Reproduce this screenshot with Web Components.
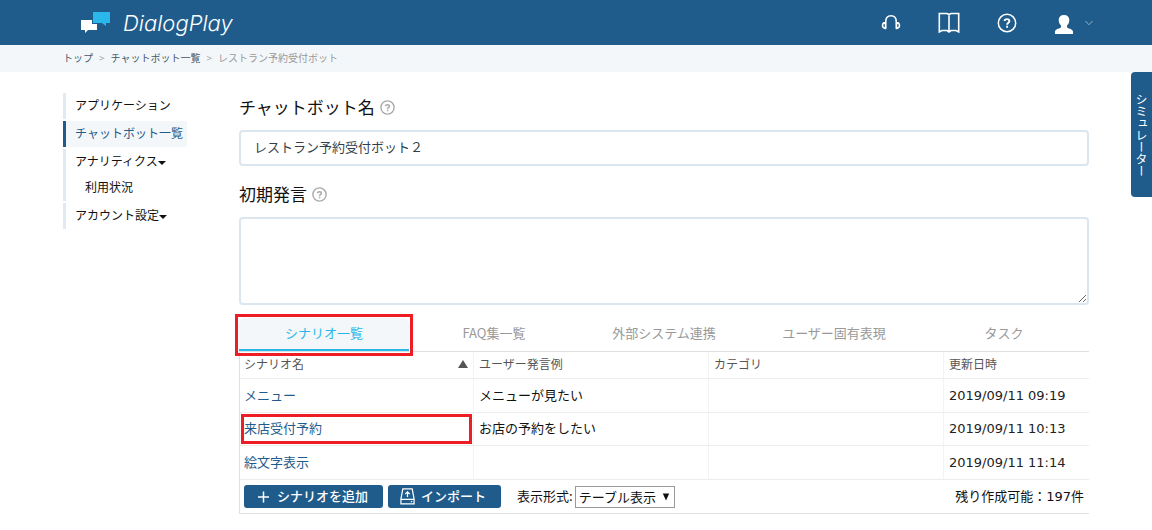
<!DOCTYPE html>
<html lang="ja">
<head>
<meta charset="utf-8">
<title>DialogPlay</title>
<style>
  body { margin: 0; background: #fff; color: #111; font: 13px/20px "Noto Sans CJK JP", "Noto Sans", sans-serif; }
</style>
</head>
<body>
<dp-app></dp-app>

<template id="t-header">
  <style>
    :host { display: flex; align-items: center; justify-content: space-between; height: 45px; padding: 0 59px 0 80px; background: #1f5c8b; color: #fff; }
    a { color: inherit; text-decoration: none; display: flex; align-items: center; }
    .brand { gap: 13px; font: italic 300 22px/28px Inter, sans-serif; }
    nav { display: flex; align-items: center; gap: 37px; }
    svg { display: block; }
    .user { gap: 11px; }
  </style>
  <a class="brand" href="#">
    <svg width="30" height="24" viewBox="0 0 30 24"><path fill="#2ab8ec" d="M13 1h17v11h-4v3l-4-3h-9z"/><path fill="#fff" d="M1 9h11v4h5v6H8l-3 3v-3H1z"/></svg>
    <span>DialogPlay</span>
  </a>
  <nav aria-label="ユーティリティ">
    <a href="#" aria-label="サポート"><svg width="20" height="20" viewBox="0 0 20 20" fill="none" stroke="#fff" stroke-width="1.500"><path d="M4.800 15.500V8.500C4.800 4.700 6.800 2.700 10 2.700s5.200 2 5.200 5.800V15.500M4.500 9.500C2.500 9.700 1.500 11 1.500 12.500s1 2.800 3 3zM15.500 9.500c2 .2 3 1.500 3 3s-1 2.800-3 3z"/></svg></a>
    <a href="#" aria-label="マニュアル"><svg width="22" height="22" viewBox="0 0 22 22" fill="none" stroke="#fff" stroke-width="1.600"><path d="M1.300 1.500H9l2 1 2-1h7.700V20l-2.700-1.500h-5L11 20l-2-1.500H4L1.300 20zM11 2.500V19"/></svg></a>
    <a href="#" aria-label="ヘルプ"><svg width="20" height="20" viewBox="0 0 20 20" fill="none" stroke="#fff"><circle cx="10" cy="10" r="8.700" stroke-width="1.500"/><path stroke-width="1.900" d="M7.600 8C7.600 5.500 12.400 5.500 12.400 8c0 1.700-2.300 1.600-2.300 3.700M10.100 12.700v2"/></svg></a>
    <a class="user" href="#" aria-label="アカウント">
      <svg width="20" height="22" viewBox="0 0 20 22" fill="#fff"><path d="M10 3c3.500 0 5.300 2 5.300 5 0 2.400-1 4.200-2.300 5.400v1.600c0 1.400 6 2 6 4.500V22H1v-2.500c0-2.500 6-3.100 6-4.500v-1.600C5.700 12.200 4.700 10.400 4.700 8c0-3 1.800-5 5.300-5z"/></svg>
      <svg width="8" height="6" viewBox="0 0 8 6" fill="none" stroke="#8fb0c9"><path d="M.5 1L4 4.800 7.500 1"/></svg>
    </a>
  </nav>
</template>

<template id="t-crumbs">
  <style>
    :host { display: block; height: 27px; padding: 0 63px; background: #f3f7fa; font-size: 10px; line-height: 26px; color: #999; }
    ol { display: flex; gap: 6px; margin: 0; padding: 0; list-style: none; }
    li + li::before { content: ">"; margin-right: 6px; color: #aaa; }
    a { color: #46586a; text-decoration: none; }
  </style>
  <ol><li><a href="#">トップ</a></li><li><a href="#">チャットボット一覧</a></li><li aria-current="page">レストラン予約受付ボット</li></ol>
</template>

<template id="t-nav-item">
  <style>
    :host { display: block; box-sizing: border-box; border-left: 3px solid #e1eaf2; padding-left: 9px; font-size: 12px; line-height: 26px; }
    :host([active]) { border-color: #1f5c8b; background: #f3f7fa; }
    a { display: flex; align-items: center; color: #111; text-decoration: none; height: 24px; padding-bottom: 2px; }
    :host([active]) a { color: #1f5c8b; }
    :host([menu]) a::after { content: ""; border: 4px solid transparent; border-top-color: #111; border-bottom: 0; margin-top: 4px; }
    ::slotted(*) { display: block; padding-left: 10px; height: 26px; }
  </style>
  <a href="#"></a><slot></slot>
</template>

<template id="t-sub-link">
  <style>
    a { color: #111; text-decoration: none; line-height: 24px; display: block; }
  </style>
  <a href="#"><slot></slot></a>
</template>

<template id="t-field">
  <style>
    :host { display: block; }
    .head { display: flex; align-items: center; gap: 5px; height: 27px; margin-bottom: 10px; }
    label { font-size: 17px; line-height: 27px; }
    svg { display: block; margin-top: 2px; }
    input, textarea { display: block; box-sizing: border-box; width: 100%; margin: 0; border: 2px solid #dce6ee; border-radius: 4px; padding: 0 13px 3px; background: #fff; color: #333f4a; font: inherit; outline: 0; }
    input { height: 36px; }
    textarea { height: 88px; resize: vertical; }
  </style>
  <div class="head">
    <label for="control"></label>
    <svg width="15" height="15" viewBox="0 0 15 15" fill="none" stroke="#aaa"><circle cx="7.500" cy="7.500" r="6.600" stroke-width="1.400"/><path stroke-width="1.500" d="M5.600 6.200c0-2 3.800-2 3.800 0 0 1.300-1.800 1.200-1.800 2.700M7.600 9.700v1.600"/></svg>
  </div>
</template>

<template id="t-tabs">
  <style>
    :host { display: block; position: relative; }
    div { display: grid; grid-template-columns: repeat(5, 1fr); border-bottom: 1px solid #e0e0e0; }
    button { height: 33px; border: 0; border-bottom: 2px solid transparent; border-radius: 6px 6px 0 0; padding: 0 0 2px; background: none; color: #999; font: inherit; }
    button[aria-selected=true] { background: #f3f7fa; border-bottom-color: #29b6ea; color: #29b6ea; }
    dp-marker { inset: -4px auto -4px -4px; width: calc(20% + 8px); }
  </style>
  <div role="tablist">
    <button role="tab" aria-selected="true">シナリオ一覧</button>
    <button role="tab" aria-selected="false">FAQ集一覧</button>
    <button role="tab" aria-selected="false">外部システム連携</button>
    <button role="tab" aria-selected="false">ユーザー固有表現</button>
    <button role="tab" aria-selected="false">タスク</button>
  </div>
  <dp-marker></dp-marker>
</template>

<template id="t-marker">
  <style>:host { display: block; position: absolute; border: 3px solid #ee1c25; box-sizing: border-box; pointer-events: none; }</style>
</template>

<template id="t-table">
  <style>
    :host { display: block; border-left: 1px solid #e0e0e0; }
    table { width: 100%; table-layout: fixed; border-collapse: separate; border-spacing: 0; }
    .name { width: 233px; }
    .date { width: 146px; }
    th, td { box-sizing: border-box; text-align: left; font-weight: 400; padding: 0 5px 2px 4px; border-bottom: 1px solid #ececec; }
    th + th, td + td { border-left: 1px solid #f3f3f3; padding-left: 5px; }
    th { height: 27px; font-size: 12px; line-height: 20px; color: #555; }
    td { height: 34px; line-height: 20px; position: relative; }
    tr:nth-child(2) td { height: 33px; }
    td:last-child { font-family: "DejaVu Sans", sans-serif; color: #222; padding-bottom: 0; }
    .sort { display: flex; justify-content: space-between; align-items: center; }
    .sort::after { content: ""; border: 5px solid transparent; border-bottom: 8px solid #555; border-top: 0; }
    a { color: #1f5c8b; text-decoration: none; }
    dp-marker { inset: 1px; }
  </style>
  <table>
    <thead><tr><th class="name" aria-sort="ascending"><span class="sort">シナリオ名</span></th><th>ユーザー発言例</th><th>カテゴリ</th><th class="date">更新日時</th></tr></thead>
    <tbody>
      <tr><td><a href="#">メニュー</a></td><td>メニューが見たい</td><td></td><td>2019/09/11 09:19</td></tr>
      <tr><td><a href="#">来店受付予約</a><dp-marker></dp-marker></td><td>お店の予約をしたい</td><td></td><td>2019/09/11 10:13</td></tr>
      <tr><td><a href="#">絵文字表示</a></td><td></td><td></td><td>2019/09/11 11:14</td></tr>
    </tbody>
  </table>
</template>

<template id="t-button">
  <style>
    :host { display: block; }
    button { display: flex; align-items: center; gap: 6px; height: 23px; border: 0; border-radius: 3px; padding: 0 15px 1px 12px; background: #1f5c8b; color: #fff; font: inherit; font-weight: 500; }
  </style>
  <button type="button"><slot name="icon"></slot><slot></slot></button>
</template>

<template id="t-toolbar">
  <style>
    :host { display: flex; align-items: center; height: 33px; padding: 0 5px 0 4px; border: 1px solid #e0e0e0; border-width: 0 0 1px 1px; }
    svg { display: block; }
    dp-button + dp-button { margin-left: 5px; }
    .view { display: flex; align-items: center; gap: 2px; margin-left: 16px; }
    .view label { padding-bottom: 2px; }
    .pick { position: relative; }
    select { appearance: none; display: block; width: 100px; height: 22px; border: 1px solid #999; border-radius: 0; background: #fff; color: #111; padding: 0 3px 2px; font: inherit; line-height: 20px; }
    .pick svg { position: absolute; right: 5px; top: 7px; pointer-events: none; }
    .left { margin-left: auto; padding-bottom: 2px; }
    b { font: 13px "DejaVu Sans", sans-serif; }
  </style>
  <dp-button><svg slot="icon" width="15" height="15" viewBox="0 0 15 15" stroke="#fff" stroke-width="1.500"><path d="M7.500 2.500v11M2 8h11"/></svg>シナリオを追加</dp-button>
  <dp-button><svg slot="icon" width="15" height="18" viewBox="0 0 16 18" fill="none" stroke="#fff" stroke-width="1.300"><path d="M3 1.500H13L15 12V17.300H1V12zM1 12.500H15M8 10V5M5.500 7L8 4.500l2.500 2.500M11.500 15h1.500"/></svg>インポート</dp-button>
  <div class="view">
    <label for="view">表示形式:</label>
    <span class="pick"><select id="view"><option>テーブル表示</option></select><svg width="8" height="8" viewBox="0 0 8 8" fill="#111"><path d="M.8 .5h6.400L4 7.500z"/></svg></span>
  </div>
  <span class="left">残り作成可能：<b>197</b>件</span>
</template>

<template id="t-simulator">
  <style>
    :host { display: block; position: fixed; right: 0; top: 72px; }
    button { writing-mode: vertical-rl; width: 21px; height: 125px; border: 0; border-radius: 4px 0 0 4px; padding: 0; background: #1f5c8b; color: #fff; font: inherit; font-size: 12px; line-height: 21px; }
  </style>
  <button type="button">シミュレーター</button>
</template>

<template id="t-app">
  <style>
    :host { display: block; }
    .page { display: flex; align-items: flex-start; gap: 52px; padding: 21px 63px 16px; }
    aside { flex: 0 0 124px; display: grid; gap: 2px; }
    main { flex: 1; min-width: 0; }
    dp-field + dp-field { margin-top: 14px; }
    dp-tabs { margin-top: 13px; }
  </style>
  <dp-header></dp-header>
  <dp-crumbs></dp-crumbs>
  <div class="page">
    <aside>
      <dp-nav-item label="アプリケーション"></dp-nav-item>
      <dp-nav-item active label="チャットボット一覧"></dp-nav-item>
      <dp-nav-item menu label="アナリティクス"><dp-sub-link>利用状況</dp-sub-link></dp-nav-item>
      <dp-nav-item menu label="アカウント設定"></dp-nav-item>
    </aside>
    <main>
      <dp-field label="チャットボット名" value="レストラン予約受付ボット２"></dp-field>
      <dp-field label="初期発言" multiline></dp-field>
      <dp-tabs></dp-tabs>
      <dp-table></dp-table>
      <dp-toolbar></dp-toolbar>
    </main>
  </div>
  <dp-simulator></dp-simulator>
</template>

<script>
  class Base extends HTMLElement {
    constructor() {
      super();
      const id = this.localName.replace('dp-', 't-');
      this.attachShadow({ mode: 'open' }).append(document.getElementById(id).content.cloneNode(true));
    }
  }
  class NavItem extends Base {
    connectedCallback() { this.shadowRoot.querySelector('a').textContent = this.getAttribute('label'); }
  }
  class Field extends Base {
    connectedCallback() {
      if (this.shadowRoot.getElementById('control')) return;
      this.shadowRoot.querySelector('label').textContent = this.getAttribute('label');
      const control = document.createElement(this.hasAttribute('multiline') ? 'textarea' : 'input');
      control.id = 'control';
      control.value = this.getAttribute('value') || '';
      this.shadowRoot.append(control);
    }
  }
  for (const name of ['header', 'crumbs', 'sub-link', 'marker', 'tabs', 'table', 'button', 'toolbar', 'simulator'])
    customElements.define('dp-' + name, class extends Base {});
  customElements.define('dp-nav-item', NavItem);
  customElements.define('dp-field', Field);
  customElements.define('dp-app', class extends Base {});
</script>
</body>
</html>
